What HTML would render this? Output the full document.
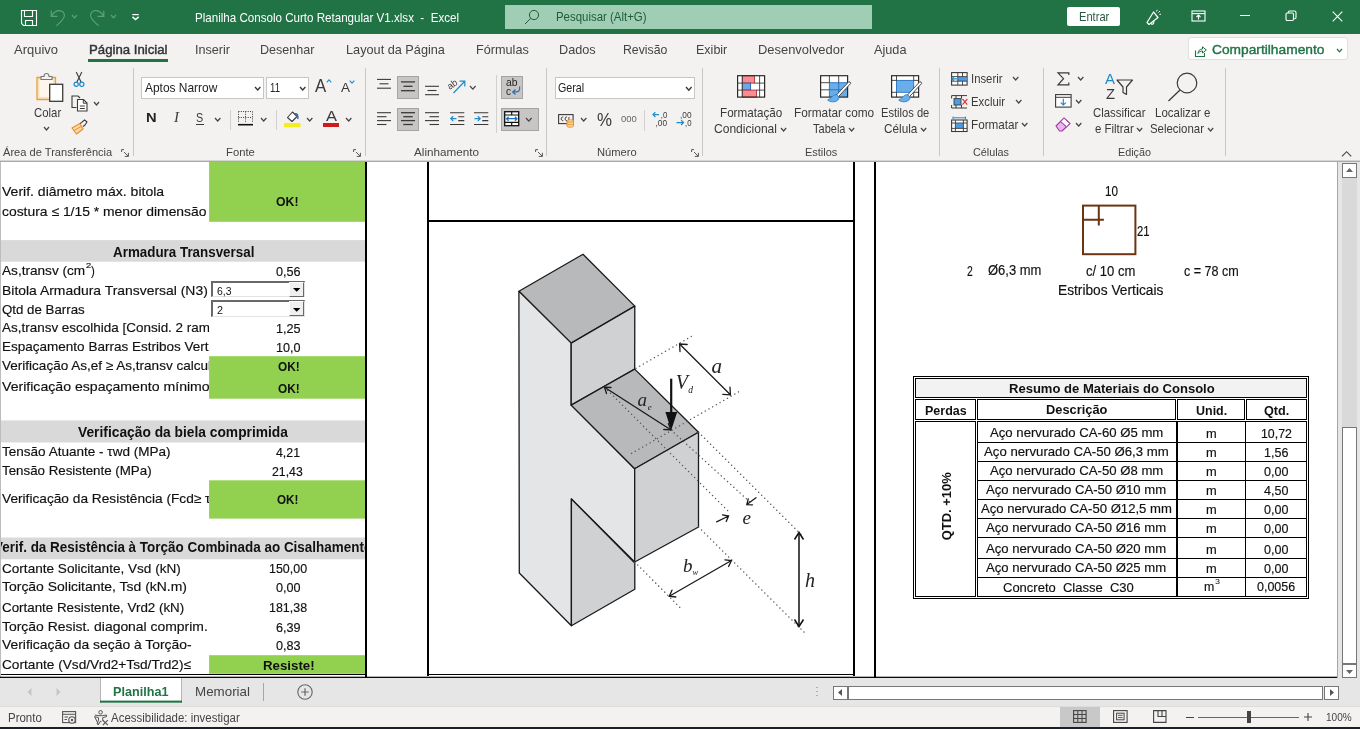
<!DOCTYPE html>
<html><head><meta charset="utf-8"><title>Excel</title>
<style>
html,body{margin:0;padding:0;}
body{width:1360px;height:729px;overflow:hidden;position:relative;background:#f3f2f1;font-family:"Liberation Sans",sans-serif;}
div,span.t,svg{position:absolute;}
span.t{white-space:pre;transform-origin:0 0;}
svg{overflow:visible;}
</style></head><body><div id="w" style="left:0;top:0;width:1360px;height:729px;will-change:transform;">
<div style="left:0px;top:0px;width:1360px;height:34px;background:#217346;"></div>
<svg style="left:20px;top:9px;" width="18" height="18" viewBox="0 0 18 18"><path d="M1.5 1.5 H16.5 V16.5 H3.5 L1.5 14.5 Z" fill="none" stroke="#fff" stroke-width="1.1" stroke-linejoin="miter"/><path d="M4.5 1.5 V7.5 H12.5 V1.5 M5.5 16.5 V11.5 H12.5 V16.5" fill="none" stroke="#fff" stroke-width="1.1"/></svg>
<svg style="left:50px;top:9px;" width="16" height="18" viewBox="0 0 16 18"><path d="M1.2 1.5 V7.3 H7.4" fill="none" stroke="#5fa07c" stroke-width="1.15"/><path d="M1.4 7.1 C3.5 3.5 6.5 1.7 9.4 1.7 C12.5 1.7 14.6 3.9 14.4 6.7 C14.2 10 10 13.5 6.3 16.8" fill="none" stroke="#5fa07c" stroke-width="1.15"/></svg>
<svg style="left:71.1px;top:13.5px;" width="7" height="4.8" viewBox="0 0 7 4.8"><path d="M1 1 L3.5 3.8 L6 1" fill="none" stroke="#5fa07c" stroke-width="1.15"/></svg>
<svg style="left:89.3px;top:9px;" width="16" height="18" viewBox="0 0 16 18"><path d="M14.8 1.5 V7.3 H8.6" fill="none" stroke="#5fa07c" stroke-width="1.15"/><path d="M14.6 7.1 C12.5 3.5 9.5 1.7 6.6 1.7 C3.5 1.7 1.4 3.9 1.6 6.7 C1.8 10 6 13.5 9.7 16.8" fill="none" stroke="#5fa07c" stroke-width="1.15"/></svg>
<svg style="left:110.1px;top:13.5px;" width="7" height="4.8" viewBox="0 0 7 4.8"><path d="M1 1 L3.5 3.8 L6 1" fill="none" stroke="#5fa07c" stroke-width="1.15"/></svg>
<svg style="left:131px;top:13px;" width="10" height="9" viewBox="0 0 10 9"><path d="M1.3 1.6 H7.8" stroke="#fff" stroke-width="1.2"/><path d="M1.5 3.8 L4.55 6.5 L7.6 3.8" fill="none" stroke="#fff" stroke-width="1.6"/></svg>
<span class="t" style="left:194.50px;top:11.00px;font:13px/1 'Liberation Sans',sans-serif;color:#fff;transform:scaleX(0.8911);">Planilha Consolo Curto Retangular V1.xlsx  -  Excel</span>
<div style="left:505px;top:5px;width:367px;height:24px;background:#9fceb4;"></div>
<svg style="left:524px;top:9px;" width="16" height="16" viewBox="0 0 16 16"><circle cx="10" cy="6" r="4.6" fill="none" stroke="#1e5c3a" stroke-width="1"/><path d="M6.7 9.3 L1 15" stroke="#1e5c3a" stroke-width="1"/></svg>
<span class="t" style="left:555.50px;top:11.00px;font:12.5px/1 'Liberation Sans',sans-serif;color:#1e5c3a;transform:scaleX(0.9142);">Pesquisar (Alt+G)</span>
<div style="left:1067px;top:7px;width:53px;height:19px;background:#fff;border-radius:2px;"></div>
<span class="t" style="left:1078.50px;top:11.00px;font:12.8px/1 'Liberation Sans',sans-serif;color:#2b5a40;transform:scaleX(0.8692);">Entrar</span>
<svg style="left:1144px;top:9px;" width="18" height="17" viewBox="0 0 18 17"><path d="M3 13.5 L9.5 3 L14 8.5 L5 15.5 Z" fill="none" stroke="#fff" stroke-width="1.2" stroke-linejoin="round"/><path d="M7 14 C7 16 10 16 10 12" fill="none" stroke="#fff" stroke-width="1.1"/><path d="M12.5 2.5 L13.2 0.8 M14.5 3.5 L16 2 M15.5 5.5 L17 5.2" stroke="#fff" stroke-width="1"/></svg>
<svg style="left:1191px;top:10px;" width="15" height="12" viewBox="0 0 15 12"><rect x="1" y="1" width="13" height="10" fill="none" stroke="#fff" stroke-width="1.1"/><path d="M1 3.6 H14" stroke="#fff" stroke-width="1.1"/><path d="M7.5 9.5 V5.3 M5.5 7 L7.5 5 L9.5 7" fill="none" stroke="#fff" stroke-width="1.1"/></svg>
<div style="left:1240px;top:15px;width:10px;height:1px;background:#fff;"></div>
<svg style="left:1285px;top:10px;" width="12" height="12" viewBox="0 0 12 12"><rect x="1" y="3" width="7.5" height="7.5" rx="1.2" fill="none" stroke="#fff" stroke-width="1.1"/><path d="M3.3 3 V2.2 Q3.3 1 4.5 1 H9.5 Q11 1 11 2.5 V7.5 Q11 8.7 9.8 8.7 H8.5" fill="none" stroke="#fff" stroke-width="1.1"/></svg>
<svg style="left:1332px;top:11px;" width="11" height="11" viewBox="0 0 11 11"><path d="M0.7 0.7 L10.3 10.3 M10.3 0.7 L0.7 10.3" stroke="#fff" stroke-width="1.1"/></svg>
<div style="left:0px;top:34px;width:1360px;height:127px;background:#f3f2f1;"></div>
<span class="t" style="left:14.30px;top:43.00px;font:13.4px/1 'Liberation Sans',sans-serif;color:#444;transform:scaleX(0.9684);">Arquivo</span>
<span class="t" style="left:195.00px;top:43.00px;font:13.4px/1 'Liberation Sans',sans-serif;color:#444;transform:scaleX(0.9401);">Inserir</span>
<span class="t" style="left:260.00px;top:43.00px;font:13.4px/1 'Liberation Sans',sans-serif;color:#444;transform:scaleX(0.9380);">Desenhar</span>
<span class="t" style="left:345.50px;top:43.00px;font:13.4px/1 'Liberation Sans',sans-serif;color:#444;transform:scaleX(0.9491);">Layout da Página</span>
<span class="t" style="left:476.20px;top:43.00px;font:13.4px/1 'Liberation Sans',sans-serif;color:#444;transform:scaleX(0.9454);">Fórmulas</span>
<span class="t" style="left:558.80px;top:43.00px;font:13.4px/1 'Liberation Sans',sans-serif;color:#444;transform:scaleX(0.9475);">Dados</span>
<span class="t" style="left:623.20px;top:43.00px;font:13.4px/1 'Liberation Sans',sans-serif;color:#444;transform:scaleX(0.9150);">Revisão</span>
<span class="t" style="left:696.20px;top:43.00px;font:13.4px/1 'Liberation Sans',sans-serif;color:#444;transform:scaleX(0.9341);">Exibir</span>
<span class="t" style="left:757.50px;top:43.00px;font:13.4px/1 'Liberation Sans',sans-serif;color:#444;transform:scaleX(0.9655);">Desenvolvedor</span>
<span class="t" style="left:874.00px;top:43.00px;font:13.4px/1 'Liberation Sans',sans-serif;color:#444;transform:scaleX(0.9483);">Ajuda</span>
<span class="t" style="left:88.50px;top:43.00px;font:13.4px/1 'Liberation Sans',sans-serif;color:#333;transform:scaleX(0.9848);-webkit-text-stroke:0.45px #333;">Página Inicial</span>
<div style="left:88px;top:59px;width:80px;height:2.5px;background:#217346;"></div>
<div style="left:1187.5px;top:37.3px;width:160px;height:23px;background:#fff;border:1px solid #e1dfdd;border-radius:3px;box-sizing:border-box;"></div>
<svg style="left:1194px;top:45px;" width="14" height="13" viewBox="0 0 14 13"><path d="M1.5 5.5 V11.5 H10.5 V8" fill="none" stroke="#217346" stroke-width="1.1"/><path d="M4 8.5 C4 5.5 6 4 8.5 4 V1.8 L12.3 5 L8.5 8 V6 C6.5 6 5 6.8 4 8.5 Z" fill="none" stroke="#217346" stroke-width="1" stroke-linejoin="round"/></svg>
<span class="t" style="left:1212.00px;top:43.00px;font:13.4px/1 'Liberation Sans',sans-serif;color:#217346;transform:scaleX(1.0275);-webkit-text-stroke:0.4px #217346;">Compartilhamento</span>
<svg style="left:1336.3px;top:47.9px;" width="7" height="4.8" viewBox="0 0 7 4.8"><path d="M1 1 L3.5 3.8 L6 1" fill="none" stroke="#217346" stroke-width="1.2"/></svg>
<div style="left:0px;top:160px;width:1360px;height:2px;background:#c6c6c6;"></div>
<div style="left:0px;top:160px;width:1360px;height:1px;background:#d6d4d2;"></div>
<div style="left:0px;top:161px;width:1360px;height:1px;background:#a9a9a9;"></div>
<div style="left:132.5px;top:68px;width:1px;height:87.5px;background:#c8c6c4;"></div>
<div style="left:364.5px;top:68px;width:1px;height:87.5px;background:#c8c6c4;"></div>
<div style="left:546.0px;top:68px;width:1px;height:87.5px;background:#c8c6c4;"></div>
<div style="left:702.0px;top:68px;width:1px;height:87.5px;background:#c8c6c4;"></div>
<div style="left:939.0px;top:68px;width:1px;height:87.5px;background:#c8c6c4;"></div>
<div style="left:1042.5px;top:68px;width:1px;height:87.5px;background:#c8c6c4;"></div>
<div style="left:1225.0px;top:68px;width:1px;height:87.5px;background:#c8c6c4;"></div>
<span class="t" style="left:3.20px;top:147.00px;font:11.8px/1 'Liberation Sans',sans-serif;color:#444;transform:scaleX(0.9414);">Área de Transferência</span>
<span class="t" style="left:225.60px;top:147.00px;font:11.8px/1 'Liberation Sans',sans-serif;color:#444;transform:scaleX(0.9544);">Fonte</span>
<span class="t" style="left:414.40px;top:147.00px;font:11.8px/1 'Liberation Sans',sans-serif;color:#444;transform:scaleX(0.9909);">Alinhamento</span>
<span class="t" style="left:596.60px;top:147.00px;font:11.8px/1 'Liberation Sans',sans-serif;color:#444;transform:scaleX(0.9459);">Número</span>
<span class="t" style="left:804.50px;top:147.00px;font:11.8px/1 'Liberation Sans',sans-serif;color:#444;transform:scaleX(0.9293);">Estilos</span>
<span class="t" style="left:973.20px;top:147.00px;font:11.8px/1 'Liberation Sans',sans-serif;color:#444;transform:scaleX(0.9148);">Células</span>
<span class="t" style="left:1117.50px;top:147.00px;font:11.8px/1 'Liberation Sans',sans-serif;color:#444;transform:scaleX(0.9146);">Edição</span>
<svg style="left:121px;top:148.5px;" width="8" height="8" viewBox="0 0 8 8"><path d="M0.6 3 V0.6 H3 M7.4 3.8 V7.4 H3.8 M3 3 L7.2 7.2" fill="none" stroke="#555" stroke-width="1"/></svg>
<svg style="left:353.2px;top:148.5px;" width="8" height="8" viewBox="0 0 8 8"><path d="M0.6 3 V0.6 H3 M7.4 3.8 V7.4 H3.8 M3 3 L7.2 7.2" fill="none" stroke="#555" stroke-width="1"/></svg>
<svg style="left:535px;top:148.5px;" width="8" height="8" viewBox="0 0 8 8"><path d="M0.6 3 V0.6 H3 M7.4 3.8 V7.4 H3.8 M3 3 L7.2 7.2" fill="none" stroke="#555" stroke-width="1"/></svg>
<svg style="left:691px;top:148.5px;" width="8" height="8" viewBox="0 0 8 8"><path d="M0.6 3 V0.6 H3 M7.4 3.8 V7.4 H3.8 M3 3 L7.2 7.2" fill="none" stroke="#555" stroke-width="1"/></svg>
<svg style="left:1341px;top:149.5px;" width="11" height="8" viewBox="0 0 11 8"><path d="M1 6.3 L5.6 1.7 L10.2 6.3" fill="none" stroke="#444" stroke-width="1.15"/></svg>
<svg style="left:35px;top:71px;" width="30" height="32" viewBox="0 0 30 32"><path d="M2 6.5 H20.5 V28.5 H2 Z" fill="#fbe3c2" stroke="#e8a03c" stroke-width="1.3"/><path d="M4.5 9 H18 V26 H4.5 Z" fill="#fdf6ec" stroke="none"/><path d="M6 8.5 V5.5 H9 C9 1.5 14 1.5 14 5.5 H17 V8.5 Z" fill="#f3f2f1" stroke="#777" stroke-width="1.1"/><rect x="14.7" y="13.3" width="13" height="17" fill="#fff" stroke="#3b3a39" stroke-width="1.3"/></svg>
<span class="t" style="left:33.50px;top:106.00px;font:13.3px/1 'Liberation Sans',sans-serif;color:#3b3a39;transform:scaleX(0.8558);">Colar</span>
<svg style="left:43.0px;top:126.0px;" width="7" height="5" viewBox="0 0 7 5"><path d="M1 1 L3.5 4 L6 1" fill="none" stroke="#444" stroke-width="1.2"/></svg>
<svg style="left:73px;top:71px;" width="12" height="17" viewBox="0 0 12 17"><path d="M3.2 1 L8.2 11.2 M8.8 1 L3.8 11.2" stroke="#3b3a39" stroke-width="1.1" fill="none"/><circle cx="3.2" cy="13.2" r="2.1" fill="none" stroke="#1e8bcd" stroke-width="1.2"/><circle cx="8.8" cy="13.2" r="2.1" fill="none" stroke="#1e8bcd" stroke-width="1.2"/></svg>
<svg style="left:70.5px;top:94.5px;" width="18" height="17" viewBox="0 0 18 17"><path d="M5.5 12.5 H1 V1 H7 L9 3" fill="none" stroke="#3b3a39" stroke-width="1.1"/><path d="M6.5 4.5 H12.5 L16 8 V16 H6.5 Z" fill="#fff" stroke="#3b3a39" stroke-width="1.1"/><path d="M12.3 4.7 V8.2 H15.8" fill="none" stroke="#3b3a39" stroke-width="1"/><path d="M8.8 11 H13.8 M8.8 13.5 H13.8" stroke="#3b3a39" stroke-width="1"/></svg>
<svg style="left:93.0px;top:100.8px;" width="7" height="5" viewBox="0 0 7 5"><path d="M1 1 L3.5 4 L6 1" fill="none" stroke="#444" stroke-width="1.2"/></svg>
<svg style="left:71px;top:118.5px;" width="17" height="16" viewBox="0 0 17 16"><path d="M1 9 L9 4.5 L12 10 L5.5 15 Z" fill="#fbd9a8" stroke="#e8912d" stroke-width="1.2" stroke-linejoin="round"/><path d="M3 11.5 L10.5 7.3" stroke="#e8912d" stroke-width="1"/><path d="M9 4.5 L10.5 3.6 L13.5 0.8 L16 3 L13.8 6.2 L12 7.5" fill="#f3f2f1" stroke="#3b3a39" stroke-width="1.1" stroke-linejoin="round"/></svg>
<div style="left:141px;top:76.5px;width:123px;height:22.5px;background:#fff;border:1px solid #c8c6c4;box-sizing:border-box;"></div>
<span class="t" style="left:144.50px;top:81.00px;font:13.3px/1 'Liberation Sans',sans-serif;color:#222;transform:scaleX(0.8974);">Aptos Narrow</span>
<svg style="left:253.5px;top:86.0px;" width="7.4" height="5" viewBox="0 0 7.4 5"><path d="M1 1 L3.7 4 L6.4 1" fill="none" stroke="#333" stroke-width="1.3"/></svg>
<div style="left:266px;top:76.5px;width:43px;height:22.5px;background:#fff;border:1px solid #c8c6c4;box-sizing:border-box;"></div>
<span class="t" style="left:270.00px;top:81.00px;font:13.3px/1 'Liberation Sans',sans-serif;color:#222;transform:scaleX(0.7243);">11</span>
<svg style="left:298.5px;top:86.0px;" width="7.4" height="5" viewBox="0 0 7.4 5"><path d="M1 1 L3.7 4 L6.4 1" fill="none" stroke="#333" stroke-width="1.3"/></svg>
<span class="t" style="left:315.30px;top:78.00px;font:17.5px/1 'Liberation Sans',sans-serif;color:#3b3a39;transform:scaleX(0.9595);">A</span>
<svg style="left:325.5px;top:79px;" width="6" height="4" viewBox="0 0 6 4"><path d="M0.7 3.3 L3 0.8 L5.3 3.3" fill="none" stroke="#1e8bcd" stroke-width="1.1"/></svg>
<span class="t" style="left:341.00px;top:81.00px;font:13.6px/1 'Liberation Sans',sans-serif;color:#3b3a39;transform:scaleX(0.9921);">A</span>
<svg style="left:349px;top:80px;" width="6" height="4" viewBox="0 0 6 4"><path d="M0.7 0.7 L3 3.2 L5.3 0.7" fill="none" stroke="#1e8bcd" stroke-width="1.1"/></svg>
<span class="t" style="left:146.20px;top:111.00px;font:bold 13.5px/1 'Liberation Sans',sans-serif;color:#222;transform:scaleX(1.0872);">N</span>
<span class="t" style="left:173.60px;top:111.00px;font:italic 14px/1 'Liberation Serif',serif;color:#3b3a39;transform:scaleX(1.0724);">I</span>
<span class="t" style="left:196.40px;top:111.00px;font:13.3px/1 'Liberation Sans',sans-serif;color:#3b3a39;transform:scaleX(0.8116);">S</span>
<div style="left:196px;top:124px;width:8px;height:1px;background:#3b3a39;"></div>
<svg style="left:213.6px;top:116.8px;" width="7.4" height="5" viewBox="0 0 7.4 5"><path d="M1 1 L3.7 4 L6.4 1" fill="none" stroke="#444" stroke-width="1.2"/></svg>
<div style="left:230px;top:109.5px;width:1px;height:20px;background:#d2d0ce;"></div>
<svg style="left:238px;top:111px;" width="15" height="15" viewBox="0 0 15 15"><path d="M0.5 0.5 H14.5 M0.5 0.5 V12 M14.5 0.5 V12 M7.5 0.5 V12 M0.5 6.5 H14.5" stroke="#3b3a39" stroke-width="1" stroke-dasharray="1 1.3" fill="none"/><path d="M0 13.7 H15" stroke="#111" stroke-width="1.6"/></svg>
<svg style="left:259.7px;top:116.8px;" width="7.4" height="5" viewBox="0 0 7.4 5"><path d="M1 1 L3.7 4 L6.4 1" fill="none" stroke="#444" stroke-width="1.2"/></svg>
<div style="left:276px;top:109.5px;width:1px;height:20px;background:#d2d0ce;"></div>
<svg style="left:284px;top:110px;" width="17" height="18" viewBox="0 0 17 18"><path d="M3.5 7.5 L8.5 2 L13 6.5 L8 11.5 Z" fill="#fff" stroke="#3b3a39" stroke-width="1.1" stroke-linejoin="round"/><path d="M10.5 4 C13 3 14.5 5 13.8 9" fill="none" stroke="#2b6cb5" stroke-width="1.5"/><rect x="0" y="13" width="16.5" height="4.2" fill="#f5ec1e"/></svg>
<svg style="left:305.8px;top:116.8px;" width="7.4" height="5" viewBox="0 0 7.4 5"><path d="M1 1 L3.7 4 L6.4 1" fill="none" stroke="#444" stroke-width="1.2"/></svg>
<span class="t" style="left:326.00px;top:109.00px;font:14.5px/1 'Liberation Sans',sans-serif;color:#3b3a39;transform:scaleX(1.1373);">A</span>
<div style="left:323.2px;top:123px;width:16px;height:4.2px;background:#d0191d;"></div>
<svg style="left:344.8px;top:116.8px;" width="7.4" height="5" viewBox="0 0 7.4 5"><path d="M1 1 L3.7 4 L6.4 1" fill="none" stroke="#444" stroke-width="1.2"/></svg>
<div style="left:397px;top:76.3px;width:22px;height:22.6px;background:#c8c6c4;border:1px solid #a6a4a2;box-sizing:border-box;"></div>
<div style="left:397px;top:108px;width:22px;height:22.8px;background:#c8c6c4;border:1px solid #a6a4a2;box-sizing:border-box;"></div>
<div style="left:501px;top:76.3px;width:22.2px;height:22.6px;background:#c8c6c4;border:1px solid #a6a4a2;box-sizing:border-box;"></div>
<div style="left:501px;top:108px;width:38.2px;height:22.8px;background:#c8c6c4;border:1px solid #a6a4a2;box-sizing:border-box;"></div>
<svg style="left:377px;top:75px;" width="14" height="24" viewBox="0 0 14 24"><path d="M0.0 4.4 H14.0" stroke="#3b3a39" stroke-width="1.1"/><path d="M2.5 8.8 H11.5" stroke="#3b3a39" stroke-width="1.1"/><path d="M0.0 13.2 H14.0" stroke="#3b3a39" stroke-width="1.1"/></svg>
<svg style="left:401px;top:75px;" width="14" height="24" viewBox="0 0 14 24"><path d="M0.0 6.9 H14.0" stroke="#3b3a39" stroke-width="1.3"/><path d="M2.5 11.3 H11.5" stroke="#3b3a39" stroke-width="1.3"/><path d="M0.0 15.7 H14.0" stroke="#3b3a39" stroke-width="1.3"/></svg>
<svg style="left:425px;top:75px;" width="14" height="24" viewBox="0 0 14 24"><path d="M0.0 11.3 H14.0" stroke="#3b3a39" stroke-width="1.1"/><path d="M2.5 15.5 H11.5" stroke="#3b3a39" stroke-width="1.1"/><path d="M0.0 19.7 H14.0" stroke="#3b3a39" stroke-width="1.1"/></svg>
<svg style="left:448px;top:78px;" width="19" height="17" viewBox="0 0 19 17"><text x="0" y="9.5" font-family="Liberation Sans,sans-serif" font-size="9.5" fill="#3b3a39" transform="rotate(-35 5 8)">ab</text><path d="M5.5 15 L16.5 3.5 M11.5 3.2 L16.8 3.2 L16.8 8.5" fill="none" stroke="#1e8bcd" stroke-width="1.2"/></svg>
<svg style="left:468.7px;top:84.6px;" width="7.6" height="5.2" viewBox="0 0 7.6 5.2"><path d="M1 1 L3.8 4.2 L6.6 1" fill="none" stroke="#444" stroke-width="1.2"/></svg>
<div style="left:496px;top:74.5px;width:1px;height:58px;background:#d2d0ce;"></div>
<span class="t" style="left:506.00px;top:78.00px;font:10px/1 'Liberation Sans',sans-serif;color:#222;transform:scaleX(1.0339);">ab</span>
<span class="t" style="left:506.00px;top:87.00px;font:10px/1 'Liberation Sans',sans-serif;color:#222;">c</span>
<svg style="left:511px;top:86px;" width="10" height="9" viewBox="0 0 10 9"><path d="M8.5 0.5 C9.5 5 8 6 2 6 M4.5 3.5 L1.7 6 L4.5 8.5" fill="none" stroke="#2b6cb5" stroke-width="1.2"/></svg>
<svg style="left:377px;top:108px;" width="14" height="24" viewBox="0 0 14 24"><path d="M0 4.7 H14" stroke="#3b3a39" stroke-width="1.1"/><path d="M0 8.7 H9.5" stroke="#3b3a39" stroke-width="1.1"/><path d="M0 12.6 H14" stroke="#3b3a39" stroke-width="1.1"/><path d="M0 16.5 H9.5" stroke="#3b3a39" stroke-width="1.1"/></svg>
<svg style="left:401px;top:108px;" width="14" height="24" viewBox="0 0 14 24"><path d="M0.0 4.7 H14.0" stroke="#3b3a39" stroke-width="1.3"/><path d="M2.25 8.7 H11.75" stroke="#3b3a39" stroke-width="1.3"/><path d="M0.0 12.6 H14.0" stroke="#3b3a39" stroke-width="1.3"/><path d="M2.25 16.5 H11.75" stroke="#3b3a39" stroke-width="1.3"/></svg>
<svg style="left:425px;top:108px;" width="14" height="24" viewBox="0 0 14 24"><path d="M0 4.7 H14" stroke="#3b3a39" stroke-width="1.1"/><path d="M4.5 8.7 H14.0" stroke="#3b3a39" stroke-width="1.1"/><path d="M0 12.6 H14" stroke="#3b3a39" stroke-width="1.1"/><path d="M4.5 16.5 H14.0" stroke="#3b3a39" stroke-width="1.1"/></svg>
<svg style="left:449.7px;top:108px;" width="15" height="24" viewBox="0 0 15 24"><path d="M0 4.7 H14.3 M8.2 8.7 H14.3 M8.2 12.6 H14.3 M0 16.5 H14.3" stroke="#3b3a39" stroke-width="1.1"/><path d="M6.5 10.6 H0.8 M3.2 8.2 L0.8 10.6 L3.2 13" fill="none" stroke="#1e8bcd" stroke-width="1.2"/></svg>
<svg style="left:473.7px;top:108px;" width="15" height="24" viewBox="0 0 15 24"><path d="M0 4.7 H14.3 M8.2 8.7 H14.3 M8.2 12.6 H14.3 M0 16.5 H14.3" stroke="#3b3a39" stroke-width="1.1"/><path d="M0.5 10.6 H6.2 M3.8 8.2 L6.2 10.6 L3.8 13" fill="none" stroke="#1e8bcd" stroke-width="1.2"/></svg>
<svg style="left:504px;top:111px;" width="16" height="16" viewBox="0 0 16 16"><rect x="0.7" y="0.7" width="14" height="14" fill="#fff" stroke="#111" stroke-width="1.3"/><path d="M0.7 4 H14.7 M0.7 11.4 H14.7 M7.7 0.7 V4 M7.7 11.4 V14.7" stroke="#111" stroke-width="1.2"/><path d="M2.5 7.7 H13 M4.6 5.7 L2.5 7.7 L4.6 9.7 M10.9 5.7 L13 7.7 L10.9 9.7" fill="none" stroke="#1e6fc0" stroke-width="1.2"/></svg>
<svg style="left:525.2px;top:116.9px;" width="7.6" height="5.2" viewBox="0 0 7.6 5.2"><path d="M1 1 L3.8 4.2 L6.6 1" fill="none" stroke="#444" stroke-width="1.2"/></svg>
<div style="left:555.4px;top:76.5px;width:139.4px;height:22.2px;background:#fff;border:1px solid #c8c6c4;box-sizing:border-box;"></div>
<span class="t" style="left:558.40px;top:81.00px;font:13.3px/1 'Liberation Sans',sans-serif;color:#222;transform:scaleX(0.8056);">Geral</span>
<svg style="left:684.5px;top:85.9px;" width="7.6" height="5.2" viewBox="0 0 7.6 5.2"><path d="M1 1 L3.8 4.2 L6.6 1" fill="none" stroke="#333" stroke-width="1.3"/></svg>
<svg style="left:558px;top:113.5px;" width="17" height="14" viewBox="0 0 17 14"><rect x="0.6" y="0.6" width="14.5" height="9" fill="none" stroke="#3b3a39" stroke-width="1.1"/><path d="M5.3 3 C2.5 2.5 2.5 7 5.3 6.7 M9 3 C6.5 2.5 6.5 7 9 6.7 M11.5 3 C10.5 3 10.5 7 11.5 6.7" fill="none" stroke="#3b3a39" stroke-width="1"/><path d="M9 7 V12 C9 13.6 15.5 13.6 15.5 12 V7 C15.5 5.4 9 5.4 9 7 Z" fill="#fbd9a8" stroke="#e8912d" stroke-width="1"/><path d="M9 7 C9 8.6 15.5 8.6 15.5 7 M9 9.5 C9 11.1 15.5 11.1 15.5 9.5" fill="none" stroke="#e8912d" stroke-width="1"/></svg>
<svg style="left:579.9px;top:116.8px;" width="7.4" height="5" viewBox="0 0 7.4 5"><path d="M1 1 L3.7 4 L6.4 1" fill="none" stroke="#444" stroke-width="1.2"/></svg>
<span class="t" style="left:597.40px;top:110.00px;font:19px/1 'Liberation Sans',sans-serif;color:#3b3a39;transform:scaleX(0.8879);">%</span>
<span class="t" style="left:621.00px;top:114.00px;font:9.5px/1 'Liberation Sans',sans-serif;color:#666;">000</span>
<div style="left:644px;top:109.5px;width:1px;height:21px;background:#d2d0ce;"></div>
<svg style="left:652px;top:111px;" width="16" height="16" viewBox="0 0 16 16"><path d="M7 3.6 H1 M3.4 1.2 L1 3.6 L3.4 6" fill="none" stroke="#1e8bcd" stroke-width="1.2"/><text x="8.8" y="7" font-family="Liberation Sans,sans-serif" font-size="8.5" fill="#3b3a39" textLength="6.5" lengthAdjust="spacingAndGlyphs">,0</text><text x="3.5" y="15" font-family="Liberation Sans,sans-serif" font-size="8.5" fill="#3b3a39" textLength="11.5" lengthAdjust="spacingAndGlyphs">,00</text></svg>
<svg style="left:676px;top:111px;" width="16" height="16" viewBox="0 0 16 16"><text x="4" y="7" font-family="Liberation Sans,sans-serif" font-size="8.5" fill="#3b3a39" textLength="11.5" lengthAdjust="spacingAndGlyphs">,00</text><path d="M0.5 11.6 H7.5 M5.1 9.2 L7.5 11.6 L5.1 14" fill="none" stroke="#1e8bcd" stroke-width="1.2"/><text x="9" y="15" font-family="Liberation Sans,sans-serif" font-size="8.5" fill="#3b3a39" textLength="6.5" lengthAdjust="spacingAndGlyphs">,0</text></svg>
<svg style="left:737px;top:74.5px;" width="29" height="23" viewBox="0 0 29 23"><rect x="0.6" y="0.7" width="27" height="21.4" fill="#fff" stroke="none"/><rect x="5.3" y="0.7" width="12.3" height="7.4" fill="#fb8b90" stroke="#a83232" stroke-width="0.9"/><rect x="5.3" y="8.1" width="8.3" height="7" fill="#6fa8e8" stroke="#1f5fa8" stroke-width="0.9"/><rect x="5.3" y="15.1" width="14.3" height="7" fill="#fb8b90" stroke="#a83232" stroke-width="0.9"/><path d="M22.6 0.7 V22.1 M0.6 8.1 H5.3 M17.6 8.1 H27.6 M0.6 15.1 H5.3 M19.6 15.1 H27.6 M5.3 0.7 V22.1" stroke="#3b3a39" stroke-width="0.9" fill="none"/><rect x="0.6" y="0.7" width="27" height="21.4" fill="none" stroke="#2b2a29" stroke-width="1.2"/></svg>
<span class="t" style="left:719.50px;top:106.00px;font:13.3px/1 'Liberation Sans',sans-serif;color:#3b3a39;transform:scaleX(0.8779);">Formatação</span>
<span class="t" style="left:713.80px;top:122.00px;font:13.3px/1 'Liberation Sans',sans-serif;color:#3b3a39;transform:scaleX(0.9064);">Condicional</span>
<svg style="left:779.6px;top:126.7px;" width="7.2" height="5" viewBox="0 0 7.2 5"><path d="M1 1 L3.6 4 L6.2 1" fill="none" stroke="#444" stroke-width="1.2"/></svg>
<svg style="left:820px;top:74.5px;" width="32" height="29" viewBox="0 0 32 29"><rect x="0.6" y="0.7" width="27" height="21.4" fill="#fff" stroke="none"/><rect x="9.4" y="7.7" width="18.2" height="14.4" fill="#69aee9"/><path d="M9.4 7.7 V22.1 M18.7 7.7 V22.1 M9.4 7.7 H27.6 M9.4 14.8 H27.6" stroke="#2372c4" stroke-width="0.9" fill="none"/><path d="M9.4 0.7 V7.7 M18.7 0.7 V7.7 M0.6 7.7 H9.4 M0.6 14.8 H9.4" stroke="#3b3a39" stroke-width="0.9" fill="none"/><rect x="0.6" y="0.7" width="27" height="21.4" fill="none" stroke="#2b2a29" stroke-width="1.2"/><path d="M28.75 6.72 Q30.6 6.6 30.65 8.48 L18.35 21.78 L16.45 20.02 Z" fill="#fff" stroke="#3b3a39" stroke-width="0.9" stroke-linejoin="round"/><path d="M16.3 19.7 C13 19.3 12.3 22.6 7.7 25.1 C11 28 19.6 27.4 18.8 21.7 Z" fill="#69aee9" stroke="#2f7fd0" stroke-width="0.9" stroke-linejoin="round"/></svg>
<span class="t" style="left:793.80px;top:106.00px;font:13.3px/1 'Liberation Sans',sans-serif;color:#3b3a39;transform:scaleX(0.8895);">Formatar como</span>
<span class="t" style="left:812.50px;top:122.00px;font:13.3px/1 'Liberation Sans',sans-serif;color:#3b3a39;transform:scaleX(0.8292);">Tabela</span>
<svg style="left:847.6px;top:126.7px;" width="7.2" height="5" viewBox="0 0 7.2 5"><path d="M1 1 L3.6 4 L6.2 1" fill="none" stroke="#444" stroke-width="1.2"/></svg>
<svg style="left:891px;top:74.5px;" width="32" height="29" viewBox="0 0 32 29"><rect x="0.6" y="0.7" width="27" height="21.4" fill="#fff" stroke="none"/><rect x="5.5" y="5.4" width="17.2" height="11.9" fill="#69aee9" stroke="#2372c4" stroke-width="0.9"/><path d="M5.5 0.7 V5.4 M5.5 17.3 V22.1 M22.7 0.7 V5.4 M22.7 17.3 V22.1 M0.6 5.4 H5.5 M22.7 5.4 H27.6 M0.6 17.3 H5.5 M22.7 17.3 H27.6" stroke="#3b3a39" stroke-width="0.9" fill="none"/><rect x="0.6" y="0.7" width="27" height="21.4" fill="none" stroke="#2b2a29" stroke-width="1.2"/><path d="M28.75 6.72 Q30.6 6.6 30.65 8.48 L18.35 21.78 L16.45 20.02 Z" fill="#fff" stroke="#3b3a39" stroke-width="0.9" stroke-linejoin="round"/><path d="M16.3 19.7 C13 19.3 12.3 22.6 7.7 25.1 C11 28 19.6 27.4 18.8 21.7 Z" fill="#69aee9" stroke="#2f7fd0" stroke-width="0.9" stroke-linejoin="round"/></svg>
<span class="t" style="left:880.50px;top:106.00px;font:13.3px/1 'Liberation Sans',sans-serif;color:#3b3a39;transform:scaleX(0.8376);">Estilos de</span>
<span class="t" style="left:883.80px;top:122.00px;font:13.3px/1 'Liberation Sans',sans-serif;color:#3b3a39;transform:scaleX(0.8858);">Célula</span>
<svg style="left:919.6px;top:126.7px;" width="7.2" height="5" viewBox="0 0 7.2 5"><path d="M1 1 L3.6 4 L6.2 1" fill="none" stroke="#444" stroke-width="1.2"/></svg>
<svg style="left:950.5px;top:72px;" width="17" height="14" viewBox="0 0 17 14"><rect x="0.6" y="0.6" width="15.5" height="12.5" fill="#fff" stroke="#3b3a39" stroke-width="1.1"/><rect x="7" y="4.8" width="9" height="4.2" fill="#4a9be8"/><path d="M6.8 0.6 V13 M11.5 0.6 V4.6 M11.5 9.2 V13 M0.6 4.6 H16 M0.6 9.2 H16" stroke="#3b3a39" stroke-width="0.9" fill="none"/><path d="M6 6.9 H0.8 M3 4.8 L0.8 6.9 L3 9" fill="none" stroke="#1e8bcd" stroke-width="1.1"/></svg>
<span class="t" style="left:970.50px;top:72.00px;font:13.3px/1 'Liberation Sans',sans-serif;color:#3b3a39;transform:scaleX(0.8524);">Inserir</span>
<svg style="left:1011.9px;top:76.0px;" width="7.4" height="5" viewBox="0 0 7.4 5"><path d="M1 1 L3.7 4 L6.4 1" fill="none" stroke="#444" stroke-width="1.2"/></svg>
<svg style="left:950.5px;top:94.5px;" width="17" height="14" viewBox="0 0 17 14"><path d="M0.6 0.6 H16 M0.6 13 H16 M0.6 0.6 V3.5 M0.6 10 V13 M5 0.6 V3.5 M5 10 V13 M10.5 0.6 V3.5 M10.5 10 V13" stroke="#3b3a39" stroke-width="1" fill="none"/><rect x="3" y="3.6" width="7" height="6.4" fill="#4a9be8" stroke="#3b3a39" stroke-width="0.9"/><path d="M11.5 4 L16.3 9.6 M16.3 4 L11.5 9.6" stroke="#e03c3c" stroke-width="1.2"/></svg>
<span class="t" style="left:970.50px;top:95.00px;font:13.3px/1 'Liberation Sans',sans-serif;color:#3b3a39;transform:scaleX(0.8520);">Excluir</span>
<svg style="left:1015.0px;top:98.5px;" width="7.4" height="5" viewBox="0 0 7.4 5"><path d="M1 1 L3.7 4 L6.4 1" fill="none" stroke="#444" stroke-width="1.2"/></svg>
<svg style="left:950.5px;top:116px;" width="17" height="16" viewBox="0 0 17 16"><path d="M2 0.6 V3 M14.5 0.6 V3 M2 1.8 H14.5" stroke="#1e8bcd" stroke-width="1" fill="none"/><rect x="0.6" y="4" width="15.5" height="11.5" fill="#fff" stroke="#3b3a39" stroke-width="1.1"/><rect x="4.6" y="7.2" width="7.6" height="5" fill="#4a9be8"/><path d="M4.4 4 V15.5 M12.4 4 V15.5 M0.6 7 H16 M0.6 12.4 H16" stroke="#3b3a39" stroke-width="0.9" fill="none"/></svg>
<span class="t" style="left:970.50px;top:118.00px;font:13.3px/1 'Liberation Sans',sans-serif;color:#3b3a39;transform:scaleX(0.8805);">Formatar</span>
<svg style="left:1021.1px;top:122.0px;" width="7.4" height="5" viewBox="0 0 7.4 5"><path d="M1 1 L3.7 4 L6.4 1" fill="none" stroke="#444" stroke-width="1.2"/></svg>
<svg style="left:1057px;top:71.5px;" width="13" height="14" viewBox="0 0 13 14"><path d="M11.8 3 V0.8 H1 L6.5 6.7 L1 12.8 H11.8 V10.5" fill="none" stroke="#3b3a39" stroke-width="1.2" stroke-linejoin="miter"/></svg>
<svg style="left:1076.9px;top:76.0px;" width="7.4" height="5" viewBox="0 0 7.4 5"><path d="M1 1 L3.7 4 L6.4 1" fill="none" stroke="#444" stroke-width="1.2"/></svg>
<svg style="left:1055px;top:94px;" width="17" height="14" viewBox="0 0 17 14"><rect x="0.6" y="0.6" width="15.5" height="12.5" fill="#fff" stroke="#3b3a39" stroke-width="1.1"/><path d="M0.6 3.3 H16" stroke="#3b3a39" stroke-width="1"/><path d="M8.3 4.8 V11 M5.8 8.6 L8.3 11 L10.8 8.6" fill="none" stroke="#1e8bcd" stroke-width="1.2"/></svg>
<svg style="left:1074.6px;top:98.5px;" width="7.4" height="5" viewBox="0 0 7.4 5"><path d="M1 1 L3.7 4 L6.4 1" fill="none" stroke="#444" stroke-width="1.2"/></svg>
<svg style="left:1055px;top:116.5px;" width="16" height="15" viewBox="0 0 16 15"><path d="M1 9 L9 1 L15 6.5 L7 14 H4.5 Z" fill="#e8b8ea" stroke="#a33ea8" stroke-width="1.1" stroke-linejoin="round"/><path d="M5.5 4.7 L11.5 10" stroke="#a33ea8" stroke-width="1"/><path d="M5.8 4.6 L9 1.2 L14.8 6.5 L11.5 9.8 Z" fill="#fff" stroke="#a33ea8" stroke-width="1" stroke-linejoin="round"/></svg>
<svg style="left:1074.6px;top:121.8px;" width="7.4" height="5" viewBox="0 0 7.4 5"><path d="M1 1 L3.7 4 L6.4 1" fill="none" stroke="#444" stroke-width="1.2"/></svg>
<span class="t" style="left:1105.00px;top:72.00px;font:14.5px/1 'Liberation Sans',sans-serif;color:#1e8bcd;transform:scaleX(1.0339);">A</span>
<span class="t" style="left:1105.50px;top:87.00px;font:14.5px/1 'Liberation Sans',sans-serif;color:#3b3a39;transform:scaleX(1.0161);">Z</span>
<svg style="left:1116px;top:79px;" width="18" height="17" viewBox="0 0 18 17"><path d="M1 1 H16.5 L10.5 8 V15.5 L7 13.5 V8 Z" fill="#f3f2f1" stroke="#3b3a39" stroke-width="1.2" stroke-linejoin="round"/></svg>
<span class="t" style="left:1092.50px;top:106.00px;font:13.3px/1 'Liberation Sans',sans-serif;color:#3b3a39;transform:scaleX(0.8559);">Classificar</span>
<span class="t" style="left:1094.50px;top:122.00px;font:13.3px/1 'Liberation Sans',sans-serif;color:#3b3a39;transform:scaleX(0.8607);">e Filtrar</span>
<svg style="left:1136.2px;top:126.7px;" width="7.2" height="5" viewBox="0 0 7.2 5"><path d="M1 1 L3.6 4 L6.2 1" fill="none" stroke="#444" stroke-width="1.2"/></svg>
<svg style="left:1167px;top:71.5px;" width="32" height="31" viewBox="0 0 32 31"><circle cx="20" cy="11" r="9.8" fill="none" stroke="#3b3a39" stroke-width="1.2"/><path d="M13 18 L1.5 29" stroke="#3b3a39" stroke-width="1.3"/></svg>
<span class="t" style="left:1155.00px;top:106.00px;font:13.3px/1 'Liberation Sans',sans-serif;color:#3b3a39;transform:scaleX(0.8629);">Localizar e</span>
<span class="t" style="left:1150.00px;top:122.00px;font:13.3px/1 'Liberation Sans',sans-serif;color:#3b3a39;transform:scaleX(0.8592);">Selecionar</span>
<svg style="left:1207.2px;top:126.7px;" width="7.2" height="5" viewBox="0 0 7.2 5"><path d="M1 1 L3.6 4 L6.2 1" fill="none" stroke="#444" stroke-width="1.2"/></svg>
<div style="left:0px;top:162px;width:1338px;height:516px;background:#fff;"></div>
<div style="left:0px;top:162px;width:1px;height:516px;background:#bdbdbd;"></div>
<svg style="left:0px;top:0px;" width="1360" height="729" viewBox="0 0 1360 729"><rect x="209.1" y="162" width="155.9" height="59.8" fill="#92d050"/><rect x="209.1" y="356.2" width="155.9" height="42.5" fill="#92d050"/><rect x="209.1" y="480.3" width="155.9" height="38.3" fill="#92d050"/><rect x="209.1" y="655.2" width="155.9" height="18.6" fill="#92d050"/></svg>
<svg style="left:0px;top:0px;" width="1360" height="729" viewBox="0 0 1360 729"><rect x="1" y="240.1" width="364" height="21.6" fill="#d9d9d9"/></svg>
<svg style="left:0px;top:0px;" width="1360" height="729" viewBox="0 0 1360 729"><rect x="1" y="420.4" width="364" height="22.1" fill="#d9d9d9"/></svg>
<svg style="left:0px;top:0px;" width="1360" height="729" viewBox="0 0 1360 729"><rect x="1" y="537.5" width="364" height="21.8" fill="#d9d9d9"/></svg>
<div style="left:365px;top:162px;width:2px;height:516px;background:#000;"></div>
<div style="left:427px;top:162px;width:2px;height:514px;background:#000;"></div>
<div style="left:853px;top:162px;width:2px;height:514px;background:#000;"></div>
<div style="left:874px;top:162px;width:2px;height:516px;background:#000;"></div>
<div style="left:429px;top:220px;width:424px;height:2px;background:#000;"></div>
<div style="left:1px;top:674px;width:364px;height:1px;background:#000;"></div>
<div style="left:429px;top:674px;width:424px;height:1px;background:#000;"></div>
<svg style="left:0px;top:0px;" width="1360" height="729" viewBox="0 0 1360 729"><rect x="0" y="676.7" width="1338" height="1.25" fill="#000"/></svg>
<span class="t" style="left:2.20px;top:185.00px;font:13.0px/1 'Liberation Sans',sans-serif;color:#111;transform:scaleX(1.0786);-webkit-text-stroke:0.16px #111;">Verif. diâmetro máx. bitola</span>
<span class="t" style="left:2.20px;top:205.00px;font:13.0px/1 'Liberation Sans',sans-serif;color:#111;transform:scaleX(1.0684);-webkit-text-stroke:0.16px #111;">costura ≤ 1/15 * menor dimensão</span>
<span class="t" style="left:276.30px;top:195.00px;font:bold 13.2px/1 'Liberation Sans',sans-serif;color:#111;transform:scaleX(0.9299);">OK!</span>
<span class="t" style="left:112.90px;top:245.00px;font:bold 14.2px/1 'Liberation Sans',sans-serif;color:#111;transform:scaleX(0.9435);">Armadura Transversal</span>
<span class="t" style="left:2.20px;top:264.00px;font:13.0px/1 'Liberation Sans',sans-serif;color:#111;transform:scaleX(1.0471);-webkit-text-stroke:0.16px #111;">As,transv (cm</span>
<span class="t" style="left:85.80px;top:262.00px;font:8px/1 'Liberation Sans',sans-serif;color:#111;transform:scaleX(1.1687);-webkit-text-stroke:0.16px #111;">2</span>
<span class="t" style="left:91.40px;top:264.00px;font:13.0px/1 'Liberation Sans',sans-serif;color:#111;transform:scaleX(0.8777);-webkit-text-stroke:0.16px #111;">)</span>
<span class="t" style="left:276.00px;top:265.00px;font:13.0px/1 'Liberation Sans',sans-serif;color:#111;transform:scaleX(0.9722);-webkit-text-stroke:0.16px #111;">0,56</span>
<span class="t" style="left:2.20px;top:284.00px;font:13.0px/1 'Liberation Sans',sans-serif;color:#111;transform:scaleX(1.0708);-webkit-text-stroke:0.16px #111;">Bitola Armadura Transversal (N3)</span>
<span class="t" style="left:2.20px;top:303.00px;font:13.0px/1 'Liberation Sans',sans-serif;color:#111;transform:scaleX(1.0219);-webkit-text-stroke:0.16px #111;">Qtd de Barras</span>
<div style="left:211px;top:281px;width:93.5px;height:16.4px;background:#fff;border-top:2px solid #696969;border-left:2px solid #696969;border-right:1px solid #e3e3e3;border-bottom:1px solid #e3e3e3;box-sizing:border-box;"></div>
<div style="left:289px;top:282.2px;width:15px;height:14.8px;background:#f0f0f0;border-right:1.4px solid #696969;border-bottom:1.4px solid #696969;border-top:1px solid #fff;border-left:1px solid #fff;box-sizing:border-box;"></div>
<svg style="left:292.8px;top:288.3px;" width="7.4" height="3.8" viewBox="0 0 7.4 3.8"><path d="M0 0 H7.4 L3.7 3.8 Z" fill="#000"/></svg>
<span class="t" style="left:217.20px;top:286.00px;font:10.7px/1 'Liberation Sans',sans-serif;color:#111;transform:scaleX(0.9748);">6,3</span>
<div style="left:211px;top:300.2px;width:93.5px;height:16.4px;background:#fff;border-top:2px solid #696969;border-left:2px solid #696969;border-right:1px solid #e3e3e3;border-bottom:1px solid #e3e3e3;box-sizing:border-box;"></div>
<div style="left:289px;top:301.4px;width:15px;height:14.8px;background:#f0f0f0;border-right:1.4px solid #696969;border-bottom:1.4px solid #696969;border-top:1px solid #fff;border-left:1px solid #fff;box-sizing:border-box;"></div>
<svg style="left:292.8px;top:307.5px;" width="7.4" height="3.8" viewBox="0 0 7.4 3.8"><path d="M0 0 H7.4 L3.7 3.8 Z" fill="#000"/></svg>
<span class="t" style="left:217.20px;top:305.00px;font:10.7px/1 'Liberation Sans',sans-serif;color:#111;transform:scaleX(1.0082);">2</span>
<div style="left:2.2px;top:318px;width:206.9px;height:20px;overflow:hidden;"><span class="t" style="left:0px;top:3px;font:13.0px/1 'Liberation Sans',sans-serif;color:#111;-webkit-text-stroke:0.16px #111;transform:scaleX(1.0356);">As,transv escolhida [Consid. 2 ramos]</span></div>
<span class="t" style="left:276.00px;top:322.00px;font:13.0px/1 'Liberation Sans',sans-serif;color:#111;transform:scaleX(0.9722);-webkit-text-stroke:0.16px #111;">1,25</span>
<div style="left:2.2px;top:337px;width:206.9px;height:20px;overflow:hidden;"><span class="t" style="left:0px;top:3px;font:13.0px/1 'Liberation Sans',sans-serif;color:#111;-webkit-text-stroke:0.16px #111;transform:scaleX(1.0395);">Espaçamento Barras Estribos Verticais</span></div>
<span class="t" style="left:276.00px;top:341.00px;font:13.0px/1 'Liberation Sans',sans-serif;color:#111;transform:scaleX(0.9722);-webkit-text-stroke:0.16px #111;">10,0</span>
<div style="left:2.2px;top:356px;width:206.9px;height:20px;overflow:hidden;"><span class="t" style="left:0px;top:3px;font:13.0px/1 'Liberation Sans',sans-serif;color:#111;-webkit-text-stroke:0.16px #111;transform:scaleX(1.0411);">Verificação As,ef ≥ As,transv calculada</span></div>
<span class="t" style="left:277.50px;top:360.00px;font:bold 13.2px/1 'Liberation Sans',sans-serif;color:#111;transform:scaleX(0.8968);">OK!</span>
<div style="left:2.2px;top:377px;width:206.9px;height:20px;overflow:hidden;"><span class="t" style="left:0px;top:3px;font:13.0px/1 'Liberation Sans',sans-serif;color:#111;-webkit-text-stroke:0.16px #111;transform:scaleX(1.0847);">Verificação espaçamento mínimo</span></div>
<span class="t" style="left:277.50px;top:382.00px;font:bold 13.2px/1 'Liberation Sans',sans-serif;color:#111;transform:scaleX(0.8968);">OK!</span>
<span class="t" style="left:78.30px;top:425.00px;font:bold 14.2px/1 'Liberation Sans',sans-serif;color:#111;transform:scaleX(0.9716);">Verificação da biela comprimida</span>
<span class="t" style="left:2.20px;top:445.00px;font:13.0px/1 'Liberation Sans',sans-serif;color:#111;transform:scaleX(1.0411);-webkit-text-stroke:0.16px #111;">Tensão Atuante - τwd (MPa)</span>
<span class="t" style="left:276.00px;top:446.00px;font:13.0px/1 'Liberation Sans',sans-serif;color:#111;transform:scaleX(0.9485);-webkit-text-stroke:0.16px #111;">4,21</span>
<span class="t" style="left:2.20px;top:464.00px;font:13.0px/1 'Liberation Sans',sans-serif;color:#111;transform:scaleX(1.0250);-webkit-text-stroke:0.16px #111;">Tensão Resistente (MPa)</span>
<span class="t" style="left:272.00px;top:465.00px;font:13.0px/1 'Liberation Sans',sans-serif;color:#111;transform:scaleX(0.9467);-webkit-text-stroke:0.16px #111;">21,43</span>
<div style="left:2.2px;top:489px;width:206.9px;height:20px;overflow:hidden;"><span class="t" style="left:0px;top:3px;font:13.0px/1 'Liberation Sans',sans-serif;color:#111;-webkit-text-stroke:0.16px #111;transform:scaleX(1.0533);">Verificação da Resistência (Fcd≥ τwd)</span></div>
<span class="t" style="left:277.00px;top:493.00px;font:bold 13.2px/1 'Liberation Sans',sans-serif;color:#111;transform:scaleX(0.8844);">OK!</span>
<div style="left:1px;top:537px;width:364px;height:20px;overflow:hidden;"><span class="t" style="left:-6.9px;top:3px;font:bold 14.2px/1 'Liberation Sans',sans-serif;color:#111;transform:scaleX(0.9484);">Verif. da Resistência à Torção Combinada ao Cisalhamento</span></div>
<span class="t" style="left:2.20px;top:562.00px;font:13.0px/1 'Liberation Sans',sans-serif;color:#111;transform:scaleX(1.0442);-webkit-text-stroke:0.16px #111;">Cortante Solicitante, Vsd (kN)</span>
<span class="t" style="left:269.30px;top:562.00px;font:13.0px/1 'Liberation Sans',sans-serif;color:#111;transform:scaleX(0.9582);-webkit-text-stroke:0.16px #111;">150,00</span>
<span class="t" style="left:2.20px;top:580.00px;font:13.0px/1 'Liberation Sans',sans-serif;color:#111;transform:scaleX(1.0729);-webkit-text-stroke:0.16px #111;">Torção Solicitante, Tsd (kN.m)</span>
<span class="t" style="left:276.00px;top:581.00px;font:13.0px/1 'Liberation Sans',sans-serif;color:#111;transform:scaleX(0.9722);-webkit-text-stroke:0.16px #111;">0,00</span>
<span class="t" style="left:2.20px;top:601.00px;font:13.0px/1 'Liberation Sans',sans-serif;color:#111;transform:scaleX(1.0279);-webkit-text-stroke:0.16px #111;">Cortante Resistente, Vrd2 (kN)</span>
<span class="t" style="left:269.30px;top:601.00px;font:13.0px/1 'Liberation Sans',sans-serif;color:#111;transform:scaleX(0.9582);-webkit-text-stroke:0.16px #111;">181,38</span>
<span class="t" style="left:2.20px;top:620.00px;font:13.0px/1 'Liberation Sans',sans-serif;color:#111;transform:scaleX(1.0708);-webkit-text-stroke:0.16px #111;">Torção Resist. diagonal comprim.</span>
<span class="t" style="left:276.00px;top:621.00px;font:13.0px/1 'Liberation Sans',sans-serif;color:#111;transform:scaleX(0.9722);-webkit-text-stroke:0.16px #111;">6,39</span>
<span class="t" style="left:2.20px;top:638.00px;font:13.0px/1 'Liberation Sans',sans-serif;color:#111;transform:scaleX(1.0680);-webkit-text-stroke:0.16px #111;">Verificação da seção à Torção-</span>
<span class="t" style="left:276.00px;top:639.00px;font:13.0px/1 'Liberation Sans',sans-serif;color:#111;transform:scaleX(0.9722);-webkit-text-stroke:0.16px #111;">0,83</span>
<span class="t" style="left:2.20px;top:658.00px;font:13.0px/1 'Liberation Sans',sans-serif;color:#111;transform:scaleX(1.0503);-webkit-text-stroke:0.16px #111;">Cortante (Vsd/Vrd2+Tsd/Trd2)≤</span>
<span class="t" style="left:262.50px;top:659.00px;font:bold 13.2px/1 'Liberation Sans',sans-serif;color:#111;transform:scaleX(1.0067);">Resiste!</span>
<svg style="left:0;top:0;" width="1360" height="729" viewBox="0 0 1360 729">
<g stroke="#1a1a1a" stroke-width="1.3" stroke-linejoin="round">
<polygon points="518.9,291.3 583,254.3 634.8,306.1 571.2,343.1" fill="#b8b9bb"/>
<polygon points="518.9,291.3 571.2,343.1 571.2,405.1 634.7,468.8 634.7,562 571.4,499 571.4,625.7 519.3,573" fill="#e4e5e6"/>
<polygon points="571.2,343.1 634.8,306.1 634.7,369.1 571.2,405.1" fill="#d0d1d3"/>
<polygon points="571.2,405.1 634.7,369.1 698.5,432.2 634.7,468.8" fill="#b8b9bb"/>
<polygon points="634.7,468.8 698.5,432.2 698.5,527 634.7,562" fill="#d0d1d3"/>
<polygon points="571.4,499 634.8,563 634.8,589.2 571.4,625.7" fill="#d0d1d3"/>
</g>
<g stroke="#5a5a5a" stroke-width="1.4" stroke-dasharray="0.1 4.15" stroke-linecap="round" fill="none">
<path d="M636,368.3 L693,335.5"/>
<path d="M631.6,453.4 L741,390.5"/>
<path d="M604.5,387.2 L730.5,513.5"/>
<path d="M671,430 L751,503"/>
<path d="M698.5,432.2 L801,534.5"/>
<path d="M698.5,527 L806,634"/>
<path d="M634.7,562 L682,609.5"/>
</g>
<g stroke="#1a1a1a" stroke-width="1.3" fill="none" stroke-linecap="round">
<path d="M679.6,344 L730.4,394.8"/>
<path d="M680,351.5 L679.6,344 L687.2,344.5"/>
<path d="M722.8,394.4 L730.4,394.8 L730,387.2"/>
<path d="M604.5,387.2 L670.7,429.8"/>
<path d="M606.5,393.5 L604.5,387.2 L611,387.5"/>
<path d="M663.8,429.5 L670.7,429.8 L668.4,423.6"/>
<path d="M669.3,596.2 L731.4,560.5"/>
<path d="M675.8,597 L669.3,596.2 L672,590.2"/>
<path d="M724.9,559.8 L731.4,560.5 L728.6,566.5"/>
<path d="M716.6,521.8 L728.6,516 M722.5,514.8 L728.6,516 L726.2,521.5"/>
<path d="M756,497.8 L746.8,504.6 M748.2,499 L746.8,504.6 L752.5,504.8"/>
</g>
<g stroke="#111" stroke-width="1.5" fill="none">
<path d="M799,533 L799,626"/>
<path d="M794.5,539.5 L799,532.5 L803.5,539.5"/>
<path d="M794.5,619.5 L799,626.5 L803.5,619.5"/>
</g>
<path d="M671.2,378.7 L671.2,414" stroke="#111" stroke-width="2.2"/>
<polygon points="665.4,412 677.2,412 671.2,430.2" fill="#111"/>
<g font-family="Liberation Serif,serif" font-style="italic" fill="#222">
<text x="711.5" y="372.5" font-size="21">a</text>
<text x="675.8" y="388.6" font-size="20">V</text>
<text x="688.3" y="392.9" font-size="9.5">d</text>
<text x="637.5" y="405.7" font-size="19">a</text>
<text x="647.8" y="409.6" font-size="9">e</text>
<text x="742.5" y="524.4" font-size="19">e</text>
<text x="683" y="571.5" font-size="19">b</text>
<text x="692.6" y="574.8" font-size="8.5">w</text>
<text x="805" y="587" font-size="20">h</text>
</g>
</svg>
<svg style="left:0;top:0;" width="1360" height="729" viewBox="0 0 1360 729">
<g stroke="#6b3513" stroke-width="2" fill="none">
<rect x="1083" y="205.6" width="52.4" height="48.6"/>
<path d="M1098.8,205.6 V225.4 M1083,219.7 H1103.9"/>
</g></svg>
<span class="t" style="left:1104.50px;top:185.00px;font:13.8px/1 'Liberation Sans',sans-serif;color:#111;transform:scaleX(0.8469);-webkit-text-stroke:0.16px #111;">10</span>
<span class="t" style="left:1137.40px;top:225.00px;font:13.8px/1 'Liberation Sans',sans-serif;color:#111;transform:scaleX(0.8208);-webkit-text-stroke:0.16px #111;">21</span>
<span class="t" style="left:967.00px;top:265.00px;font:13.8px/1 'Liberation Sans',sans-serif;color:#111;transform:scaleX(0.7557);-webkit-text-stroke:0.16px #111;">2</span>
<span class="t" style="left:987.60px;top:264.00px;font:13.8px/1 'Liberation Sans',sans-serif;color:#111;transform:scaleX(0.9411);-webkit-text-stroke:0.16px #111;">Ø6,3 mm</span>
<span class="t" style="left:1085.60px;top:265.00px;font:13.8px/1 'Liberation Sans',sans-serif;color:#111;transform:scaleX(0.9473);-webkit-text-stroke:0.16px #111;">c/ 10 cm</span>
<span class="t" style="left:1183.60px;top:265.00px;font:13.8px/1 'Liberation Sans',sans-serif;color:#111;transform:scaleX(0.9102);-webkit-text-stroke:0.16px #111;">c = 78 cm</span>
<span class="t" style="left:1057.60px;top:284.00px;font:13.8px/1 'Liberation Sans',sans-serif;color:#111;transform:scaleX(0.9958);-webkit-text-stroke:0.16px #111;">Estribos Verticais</span>
<div style="left:916px;top:379px;width:390px;height:18px;background:#f2f2f2;"></div>
<div style="left:916px;top:379px;width:390px;height:18px;background:#f2f2f2;"></div>
<svg style="left:0;top:0;" width="1360" height="729" viewBox="0 0 1360 729" shape-rendering="crispEdges"><rect x="913.5" y="376.5" width="395.0" height="222.0" fill="none" stroke="#000"/><rect x="915.5" y="378.5" width="391.0" height="19.0" fill="none" stroke="#000"/><rect x="915.5" y="399.5" width="60.0" height="20.0" fill="none" stroke="#000"/><rect x="977.5" y="399.5" width="198.0" height="20.0" fill="none" stroke="#000"/><rect x="1177.5" y="399.5" width="67.0" height="20.0" fill="none" stroke="#000"/><rect x="1246.5" y="399.5" width="60.0" height="20.0" fill="none" stroke="#000"/><rect x="915.5" y="421.5" width="60.0" height="175.0" fill="none" stroke="#000"/><rect x="977.5" y="421.5" width="329.0" height="175.0" fill="none" stroke="#000"/><path d="M1176.5 421.5 V596.5" stroke="#000" stroke-width="2"/><path d="M1245.5 421.5 V596.5" stroke="#000" stroke-width="1"/><path d="M977.5 442.5 H1306.5" stroke="#000" stroke-width="1"/><path d="M977.5 461.5 H1306.5" stroke="#000" stroke-width="1"/><path d="M977.5 480.5 H1306.5" stroke="#000" stroke-width="1"/><path d="M977.5 499.5 H1306.5" stroke="#000" stroke-width="1"/><path d="M977.5 518.5 H1306.5" stroke="#000" stroke-width="1"/><path d="M977.5 537.5 H1306.5" stroke="#000" stroke-width="1"/><path d="M977.5 558.5 H1306.5" stroke="#000" stroke-width="1"/><path d="M977.5 577.5 H1306.5" stroke="#000" stroke-width="1"/></svg>
<span class="t" style="left:1008.80px;top:383.00px;font:bold 12.6px/1 'Liberation Sans',sans-serif;color:#111;transform:scaleX(1.0350);">Resumo de Materiais do Consolo</span>
<span class="t" style="left:924.60px;top:405.00px;font:bold 12.6px/1 'Liberation Sans',sans-serif;color:#111;transform:scaleX(0.9922);">Perdas</span>
<span class="t" style="left:1045.80px;top:404.00px;font:bold 12.6px/1 'Liberation Sans',sans-serif;color:#111;transform:scaleX(1.0209);">Descrição</span>
<span class="t" style="left:1195.80px;top:405.00px;font:bold 12.6px/1 'Liberation Sans',sans-serif;color:#111;transform:scaleX(0.9907);">Unid.</span>
<span class="t" style="left:1263.70px;top:405.00px;font:bold 12.6px/1 'Liberation Sans',sans-serif;color:#111;transform:scaleX(1.0042);">Qtd.</span>
<span class="t" style="left:989.60px;top:427.00px;font:12.7px/1 'Liberation Sans',sans-serif;color:#111;transform:scaleX(1.0371);-webkit-text-stroke:0.16px #111;">Aço nervurado CA-60 Ø5 mm</span>
<span class="t" style="left:1261.30px;top:428.00px;font:12.7px/1 'Liberation Sans',sans-serif;color:#111;transform:scaleX(0.9723);-webkit-text-stroke:0.16px #111;">10,72</span>
<span class="t" style="left:1205.50px;top:428.00px;font:12.7px/1 'Liberation Sans',sans-serif;color:#111;transform:scaleX(1.0114);-webkit-text-stroke:0.16px #111;">m</span>
<span class="t" style="left:983.90px;top:446.00px;font:12.7px/1 'Liberation Sans',sans-serif;color:#111;transform:scaleX(1.0395);-webkit-text-stroke:0.16px #111;">Aço nervurado CA-50 Ø6,3 mm</span>
<span class="t" style="left:1264.00px;top:447.00px;font:12.7px/1 'Liberation Sans',sans-serif;color:#111;transform:scaleX(0.9871);-webkit-text-stroke:0.16px #111;">1,56</span>
<span class="t" style="left:1205.50px;top:447.00px;font:12.7px/1 'Liberation Sans',sans-serif;color:#111;transform:scaleX(1.0114);-webkit-text-stroke:0.16px #111;">m</span>
<span class="t" style="left:989.60px;top:465.00px;font:12.7px/1 'Liberation Sans',sans-serif;color:#111;transform:scaleX(1.0371);-webkit-text-stroke:0.16px #111;">Aço nervurado CA-50 Ø8 mm</span>
<span class="t" style="left:1264.00px;top:466.00px;font:12.7px/1 'Liberation Sans',sans-serif;color:#111;transform:scaleX(0.9871);-webkit-text-stroke:0.16px #111;">0,00</span>
<span class="t" style="left:1205.50px;top:466.00px;font:12.7px/1 'Liberation Sans',sans-serif;color:#111;transform:scaleX(1.0114);-webkit-text-stroke:0.16px #111;">m</span>
<span class="t" style="left:986.20px;top:484.00px;font:12.7px/1 'Liberation Sans',sans-serif;color:#111;transform:scaleX(1.0341);-webkit-text-stroke:0.16px #111;">Aço nervurado CA-50 Ø10 mm</span>
<span class="t" style="left:1264.00px;top:485.00px;font:12.7px/1 'Liberation Sans',sans-serif;color:#111;transform:scaleX(0.9871);-webkit-text-stroke:0.16px #111;">4,50</span>
<span class="t" style="left:1205.50px;top:485.00px;font:12.7px/1 'Liberation Sans',sans-serif;color:#111;transform:scaleX(1.0114);-webkit-text-stroke:0.16px #111;">m</span>
<span class="t" style="left:981.20px;top:503.00px;font:12.7px/1 'Liberation Sans',sans-serif;color:#111;transform:scaleX(1.0328);-webkit-text-stroke:0.16px #111;">Aço nervurado CA-50 Ø12,5 mm</span>
<span class="t" style="left:1264.00px;top:504.00px;font:12.7px/1 'Liberation Sans',sans-serif;color:#111;transform:scaleX(0.9871);-webkit-text-stroke:0.16px #111;">0,00</span>
<span class="t" style="left:1205.50px;top:504.00px;font:12.7px/1 'Liberation Sans',sans-serif;color:#111;transform:scaleX(1.0114);-webkit-text-stroke:0.16px #111;">m</span>
<span class="t" style="left:986.20px;top:522.00px;font:12.7px/1 'Liberation Sans',sans-serif;color:#111;transform:scaleX(1.0341);-webkit-text-stroke:0.16px #111;">Aço nervurado CA-50 Ø16 mm</span>
<span class="t" style="left:1264.00px;top:523.00px;font:12.7px/1 'Liberation Sans',sans-serif;color:#111;transform:scaleX(0.9871);-webkit-text-stroke:0.16px #111;">0,00</span>
<span class="t" style="left:1205.50px;top:523.00px;font:12.7px/1 'Liberation Sans',sans-serif;color:#111;transform:scaleX(1.0114);-webkit-text-stroke:0.16px #111;">m</span>
<span class="t" style="left:986.20px;top:543.00px;font:12.7px/1 'Liberation Sans',sans-serif;color:#111;transform:scaleX(1.0341);-webkit-text-stroke:0.16px #111;">Aço nervurado CA-50 Ø20 mm</span>
<span class="t" style="left:1264.00px;top:544.00px;font:12.7px/1 'Liberation Sans',sans-serif;color:#111;transform:scaleX(0.9871);-webkit-text-stroke:0.16px #111;">0,00</span>
<span class="t" style="left:1205.50px;top:544.00px;font:12.7px/1 'Liberation Sans',sans-serif;color:#111;transform:scaleX(1.0114);-webkit-text-stroke:0.16px #111;">m</span>
<span class="t" style="left:986.20px;top:562.00px;font:12.7px/1 'Liberation Sans',sans-serif;color:#111;transform:scaleX(1.0341);-webkit-text-stroke:0.16px #111;">Aço nervurado CA-50 Ø25 mm</span>
<span class="t" style="left:1264.00px;top:563.00px;font:12.7px/1 'Liberation Sans',sans-serif;color:#111;transform:scaleX(0.9871);-webkit-text-stroke:0.16px #111;">0,00</span>
<span class="t" style="left:1205.50px;top:563.00px;font:12.7px/1 'Liberation Sans',sans-serif;color:#111;transform:scaleX(1.0114);-webkit-text-stroke:0.16px #111;">m</span>
<span class="t" style="left:1003.10px;top:582.00px;font:12.7px/1 'Liberation Sans',sans-serif;color:#111;transform:scaleX(1.0245);-webkit-text-stroke:0.16px #111;">Concreto  Classe  C30</span>
<span class="t" style="left:1256.80px;top:581.00px;font:12.7px/1 'Liberation Sans',sans-serif;color:#111;transform:scaleX(0.9834);-webkit-text-stroke:0.16px #111;">0,0056</span>
<span class="t" style="left:1203.70px;top:581.00px;font:12.7px/1 'Liberation Sans',sans-serif;color:#111;transform:scaleX(0.9736);-webkit-text-stroke:0.16px #111;">m</span>
<span class="t" style="left:1214.80px;top:578.00px;font:7.6px/1 'Liberation Sans',sans-serif;color:#111;transform:scaleX(1.1829);">3</span>
<span class="t" style="left:913.0px;top:500.0px;width:68px;font:bold 12.6px/1 'Liberation Sans',sans-serif;color:#111;transform-origin:50% 50%;transform:rotate(-90deg) scaleX(1.0276);text-align:center;">QTD. +10%</span>
<div style="left:1338px;top:162px;width:22px;height:516px;background:#e6e6e6;"></div>
<div style="left:1337px;top:162px;width:1px;height:516px;background:#a6a6a6;"></div>
<div style="left:1342px;top:163px;width:15px;height:515px;background:#d9d9d9;"></div>
<div style="left:1342px;top:163.3px;width:15px;height:14.7px;background:#fff;border:1px solid #777;box-sizing:border-box;"></div>
<svg style="left:1346px;top:168.3px;" width="7" height="4" viewBox="0 0 7 4"><path d="M0 4 H7 L3.5 0 Z" fill="#666"/></svg>
<div style="left:1342px;top:427px;width:15px;height:237px;background:#fff;border:1px solid #777;box-sizing:border-box;"></div>
<div style="left:1342px;top:664px;width:15px;height:14.3px;background:#fff;border:1px solid #777;box-sizing:border-box;"></div>
<svg style="left:1346px;top:669.5px;" width="7" height="4" viewBox="0 0 7 4"><path d="M0 0 H7 L3.5 4 Z" fill="#666"/></svg>
<div style="left:0px;top:678px;width:1360px;height:28.5px;background:#e6e6e6;"></div>
<div style="left:100px;top:678px;width:82px;height:24.7px;background:#fff;border-left:1px solid #b5b5b5;border-right:1px solid #b5b5b5;box-sizing:border-box;"></div>
<svg style="left:0px;top:0px;" width="1360" height="729" viewBox="0 0 1360 729"><rect x="100" y="700.6" width="82" height="2.1" fill="#217346"/></svg>
<span class="t" style="left:112.50px;top:685.00px;font:bold 13.3px/1 'Liberation Sans',sans-serif;color:#217346;transform:scaleX(0.9504);">Planilha1</span>
<span class="t" style="left:194.50px;top:685.00px;font:13.3px/1 'Liberation Sans',sans-serif;color:#444;transform:scaleX(1.0057);">Memorial</span>
<div style="left:263px;top:682.5px;width:1px;height:18.5px;background:#a6a6a6;"></div>
<svg style="left:297px;top:684px;" width="16" height="16" viewBox="0 0 16 16"><circle cx="8" cy="8" r="7.2" fill="none" stroke="#666" stroke-width="1.1"/><path d="M4.2 8 H11.8 M8 4.2 V11.8" stroke="#666" stroke-width="1.2"/></svg>
<svg style="left:27px;top:687.5px;" width="5" height="8" viewBox="0 0 5 8"><path d="M4.5 0 V8 L0.3 4 Z" fill="#c6c6c6"/></svg>
<svg style="left:55.5px;top:687.5px;" width="5" height="8" viewBox="0 0 5 8"><path d="M0.5 0 V8 L4.7 4 Z" fill="#c6c6c6"/></svg>
<div style="left:816.3px;top:686.5px;width:1.6px;height:1.6px;background:#b0b0b0;"></div>
<div style="left:816.3px;top:690.5px;width:1.6px;height:1.6px;background:#b0b0b0;"></div>
<div style="left:816.3px;top:694.5px;width:1.6px;height:1.6px;background:#b0b0b0;"></div>
<div style="left:833.3px;top:685.5px;width:14.5px;height:14px;background:#fff;border:1px solid #777;box-sizing:border-box;"></div>
<svg style="left:838px;top:689px;" width="4" height="7" viewBox="0 0 4 7"><path d="M4 0 V7 L0 3.5 Z" fill="#555"/></svg>
<div style="left:847.8px;top:685.5px;width:475px;height:14px;background:#fff;border:1px solid #777;box-sizing:border-box;"></div>
<div style="left:1324.3px;top:685.5px;width:14.4px;height:14px;background:#fff;border:1px solid #777;box-sizing:border-box;"></div>
<svg style="left:1330px;top:689px;" width="4" height="7" viewBox="0 0 4 7"><path d="M0 0 V7 L4 3.5 Z" fill="#555"/></svg>
<div style="left:0px;top:706px;width:1360px;height:23px;background:#f3f2f1;"></div>
<div style="left:0px;top:706px;width:1360px;height:1px;background:#dcdcdc;"></div>
<span class="t" style="left:7.50px;top:712.00px;font:12px/1 'Liberation Sans',sans-serif;color:#444;transform:scaleX(0.9560);">Pronto</span>
<svg style="left:62px;top:710.5px;" width="15" height="14" viewBox="0 0 15 14"><rect x="0.6" y="0.6" width="13" height="11" fill="none" stroke="#555" stroke-width="1.1"/><path d="M0.6 3.3 H13.6 M2.5 6 H6 M2.5 8.5 H5" stroke="#555" stroke-width="1"/><circle cx="10" cy="9" r="3.2" fill="#f3f2f1" stroke="#555" stroke-width="1.1"/><circle cx="10" cy="9" r="1.2" fill="#555"/></svg>
<svg style="left:93.5px;top:709.5px;" width="16" height="16" viewBox="0 0 16 16"><circle cx="6.6" cy="2.3" r="1.8" fill="none" stroke="#555" stroke-width="1"/><path d="M0.8 5 L5 5.7 H8.2 L12.4 5 L12.6 6.6 L8.7 7.7 V10 L9.4 11.5 M4.5 14.6 L3.1 14 L4.5 10 V7.7 L0.6 6.6 Z M4.5 14.6 L6.6 10.9 L7.3 12" fill="none" stroke="#555" stroke-width="1" stroke-linejoin="round"/><path d="M8.8 10.2 L13.8 15.2 M13.8 10.2 L8.8 15.2" stroke="#555" stroke-width="1.15"/></svg>
<span class="t" style="left:111.30px;top:712.00px;font:12px/1 'Liberation Sans',sans-serif;color:#444;transform:scaleX(0.9552);">Acessibilidade: investigar</span>
<div style="left:1060px;top:707px;width:39.5px;height:20.5px;background:#c8c8c8;"></div>
<svg style="left:1073px;top:710px;" width="14" height="13" viewBox="0 0 14 13"><rect x="0.6" y="0.6" width="12.5" height="11.8" fill="none" stroke="#444" stroke-width="1.1"/><path d="M4.8 0.6 V12.4 M9 0.6 V12.4 M0.6 4.5 H13 M0.6 8.5 H13" stroke="#444" stroke-width="1"/></svg>
<svg style="left:1112.5px;top:710px;" width="15" height="13" viewBox="0 0 15 13"><rect x="0.6" y="0.6" width="13.5" height="11.8" fill="none" stroke="#444" stroke-width="1.1"/><rect x="3.6" y="3.2" width="7.5" height="6.6" fill="none" stroke="#444" stroke-width="1"/><path d="M5 5.3 H9.7 M5 7.6 H9.7" stroke="#444" stroke-width="0.9"/></svg>
<svg style="left:1153px;top:710px;" width="14" height="13" viewBox="0 0 14 13"><path d="M0.6 0.6 H13 V12.4 H0.6 Z M5 0.6 V6.5 H13 M9 0.6 V6.5" fill="none" stroke="#444" stroke-width="1.1"/></svg>
<div style="left:1186px;top:716.5px;width:7.5px;height:1px;background:#444;"></div>
<div style="left:1198px;top:716.6px;width:100.5px;height:1px;background:#666;"></div>
<div style="left:1247.3px;top:711px;width:4.2px;height:11.6px;background:#444;"></div>
<svg style="left:1304px;top:713px;" width="8" height="8" viewBox="0 0 8 8"><path d="M0 4 H8 M4 0 V8" stroke="#444" stroke-width="1.1"/></svg>
<span class="t" style="left:1325.80px;top:712.00px;font:11.8px/1 'Liberation Sans',sans-serif;color:#444;transform:scaleX(0.8515);">100%</span>
<div style="left:0px;top:727.4px;width:1360px;height:1.6px;background:#1b1f2b;"></div>
</div></body></html>
